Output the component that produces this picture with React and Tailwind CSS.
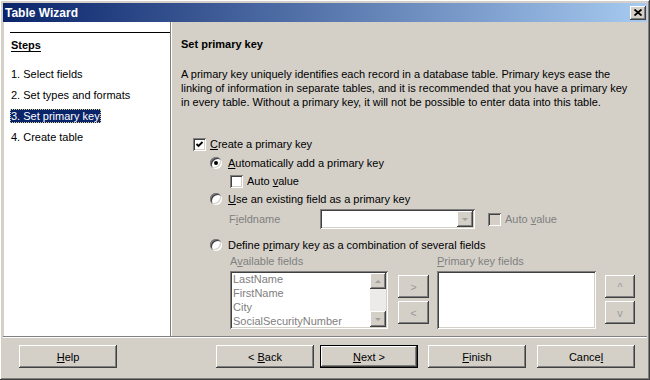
import React from "react";

const raised =
  "shadow-[inset_-1px_-1px_#404040,inset_1px_1px_#ffffff,inset_-2px_-2px_#808080,inset_2px_2px_#d4d0c8]";
const sunken =
  "shadow-[inset_1px_1px_#808080,inset_-1px_-1px_#ffffff,inset_2px_2px_#404040,inset_-2px_-2px_#d4d0c8]";

function Check({ checked, disabled }) {
  return (
    <div
      className={`w-[13px] h-[13px] shrink-0 flex items-center justify-center ${sunken} ${
        disabled ? "bg-[#d4d0c8]" : "bg-white"
      }`}
    >
      {checked && (
        <svg width="9" height="9" viewBox="0 0 9 9">
          <path d="M1.5 4 L3.5 6 L7.5 2" stroke="#000" strokeWidth="1.8" fill="none" />
        </svg>
      )}
    </div>
  );
}

function Radio({ on }) {
  return (
    <div
      className={`w-[12px] h-[12px] shrink-0 rounded-full bg-white flex items-center justify-center ${sunken}`}
    >
      {on && <div className="w-[4px] h-[4px] rounded-full bg-black" />}
    </div>
  );
}

function Arrow({ dir, color = "#a0a0a0" }) {
  const d = dir === "up" ? "M1 5 L4 2 L7 5 Z" : "M1 2 L4 5 L7 2 Z";
  return (
    <svg width="8" height="7" viewBox="0 0 8 7">
      <path d={d} fill={color} />
    </svg>
  );
}

function Btn({ children, className = "", def }) {
  return (
    <div
      className={`h-[23px] flex items-center justify-center bg-[#d4d0c8] text-black ${
        def
          ? "shadow-[inset_0_0_0_1px_#000,inset_-2px_-2px_#404040,inset_2px_2px_#ffffff,inset_-3px_-3px_#808080]"
          : raised
      } ${className}`}
    >
      {children}
    </div>
  );
}

function SmallBtn({ children }) {
  return (
    <div
      className={`w-full h-[23px] flex items-center justify-center bg-[#d4d0c8] text-[#9a9a9a] ${raised}`}
    >
      {children}
    </div>
  );
}

export default function App() {
  return (
    <div
      className={`w-[650px] h-[380px] bg-[#d4d0c8] p-[3px] flex flex-col overflow-hidden text-[11px] leading-[14px] text-black ${raised}`}
      style={{ fontFamily: '"Liberation Sans", Arial, sans-serif' }}
    >
      {/* Title bar */}
      <div className="h-[19px] shrink-0 flex items-center justify-between pl-[2px] pr-[1px] bg-[linear-gradient(to_right,#0a246a,#a6caf0)]">
        <span className="text-white font-bold text-[12px]">Table Wizard</span>
        <div className={`w-[16px] h-[14px] bg-[#d4d0c8] flex items-center justify-center ${raised}`}>
          <svg width="8" height="7" viewBox="0 0 8 7">
            <path d="M0.5 0.5 L7.5 6.5 M7.5 0.5 L0.5 6.5" stroke="#000" strokeWidth="1.8" />
          </svg>
        </div>
      </div>

      {/* Body */}
      <div className="h-[314px] shrink-0 flex">
        {/* Steps panel */}
        <div className="w-[166px] ml-[1px] bg-white flex flex-col pt-[10px]">
          <div className="h-[1px] bg-black ml-[6px]" />
          <div className="pl-[7px] mt-[5px]">
            <div className="font-bold underline underline-offset-2 h-[14px]">Steps</div>
            <div className="mt-[15px] h-[14px]">1. Select fields</div>
            <div className="mt-[7px] h-[14px]">2. Set types and formats</div>
            <div className="mt-[7px] h-[14px] -ml-[1px]">
              <span className="inline-block bg-[#0a246a] text-white pl-[1px] pr-[1px] outline-1 outline-dotted outline-[#d8cf9a] -outline-offset-1">
                3. Set primary key
              </span>
            </div>
            <div className="mt-[7px] h-[14px]">4. Create table</div>
          </div>
        </div>
        <div className="w-[1px] bg-[#808080]" />
        <div className="w-[1px] bg-white" />

        {/* Content */}
        <div className="flex-1 pl-[9px] flex flex-col">
          <div className="mt-[15px] h-[14px] font-bold">Set primary key</div>
          <div className="mt-[16px] w-[455px]">
            A primary key uniquely identifies each record in a database table. Primary keys ease the
            <br />
            linking of information in separate tables, and it is recommended that you have a primary key
            <br />
            in every table. Without a primary key, it will not be possible to enter data into this table.
          </div>

          <div className="mt-[28px] ml-[12px] h-[14px] flex items-center gap-[4px]">
            <Check checked />
            <span>
              <u>C</u>reate a primary key
            </span>
          </div>

          <div className="mt-[5px] ml-[29px] h-[14px] flex items-center gap-[6px]">
            <Radio on />
            <span>
              <u>A</u>utomatically add a primary key
            </span>
          </div>

          <div className="mt-[4px] ml-[49px] h-[14px] flex items-center gap-[4px]">
            <Check />
            <span>
              Auto <u>v</u>alue
            </span>
          </div>

          <div className="mt-[4px] ml-[29px] h-[14px] flex items-center gap-[6px]">
            <Radio />
            <span>
              <u>U</u>se an existing field as a primary key
            </span>
          </div>

          <div className="mt-[3px] ml-[48px] h-[20px] flex items-center text-[#808080]">
            <span className="w-[91px]">
              F<u>i</u>eldname
            </span>
            <div className={`w-[155px] h-[20px] bg-white flex justify-end items-center pr-[2px] ${sunken}`}>
              <div className={`w-[16px] h-[16px] bg-[#d4d0c8] flex items-center justify-center ${raised}`}>
                <Arrow dir="down" />
              </div>
            </div>
            <div className="ml-[13px] flex items-center gap-[4px]">
              <Check disabled />
              <span>
                Auto <u>v</u>alue
              </span>
            </div>
          </div>

          <div className="mt-[9px] ml-[29px] h-[14px] flex items-center gap-[6px]">
            <Radio />
            <span>
              Define p<u>r</u>imary key as a combination of several fields
            </span>
          </div>

          <div className="mt-[2px] ml-[49px] flex text-[#808080]">
            <div className="w-[158px] flex flex-col">
              <div className="h-[14px]">
                A<u>v</u>ailable fields
              </div>
              <div className={`mt-[3px] h-[58px] bg-white flex pl-[2px] pr-[2px] pt-[1px] pb-[2px] ${sunken}`}>
                <div className="flex-1 pl-[1px]">
                  <div>LastName</div>
                  <div>FirstName</div>
                  <div>City</div>
                  <div>SocialSecurityNumber</div>
                </div>
                <div className="w-[16px] mt-[1px] bg-[#ecebe7] flex flex-col justify-between">
                  <div className={`h-[16px] bg-[#d4d0c8] flex items-center justify-center ${raised}`}>
                    <Arrow dir="up" />
                  </div>
                  <div className={`h-[16px] bg-[#d4d0c8] flex items-center justify-center ${raised}`}>
                    <Arrow dir="down" />
                  </div>
                </div>
              </div>
            </div>
            <div className="ml-[10px] w-[31px] pt-[21px] flex flex-col gap-[3px]">
              <SmallBtn>&gt;</SmallBtn>
              <SmallBtn>&lt;</SmallBtn>
            </div>
            <div className="ml-[8px] w-[159px] flex flex-col">
              <div className="h-[14px]">
                <u>P</u>rimary key fields
              </div>
              <div className={`mt-[3px] h-[58px] bg-white ${sunken}`} />
            </div>
            <div className="ml-[9px] w-[30px] pt-[21px] flex flex-col gap-[3px]">
              <SmallBtn>^</SmallBtn>
              <SmallBtn>v</SmallBtn>
            </div>
          </div>
        </div>
      </div>

      {/* Separator */}
      <div className="h-[1px] bg-[#808080] shrink-0" />
      <div className="h-[1px] bg-white shrink-0" />

      {/* Buttons */}
      <div className="pt-[7px] flex items-start">
        <Btn className="ml-[16px] w-[98px]">
          <span>
            <u>H</u>elp
          </span>
        </Btn>
        <Btn className="ml-[99px] w-[98px]">
          <span>
            &lt; <u>B</u>ack
          </span>
        </Btn>
        <Btn def className="ml-[6px] w-[98px]">
          <span>
            <u>N</u>ext &gt;
          </span>
        </Btn>
        <Btn className="ml-[10px] w-[98px]">
          <span>
            <u>F</u>inish
          </span>
        </Btn>
        <Btn className="ml-[11px] w-[98px]">
          <span>
            Cance<u>l</u>
          </span>
        </Btn>
      </div>
    </div>
  );
}
